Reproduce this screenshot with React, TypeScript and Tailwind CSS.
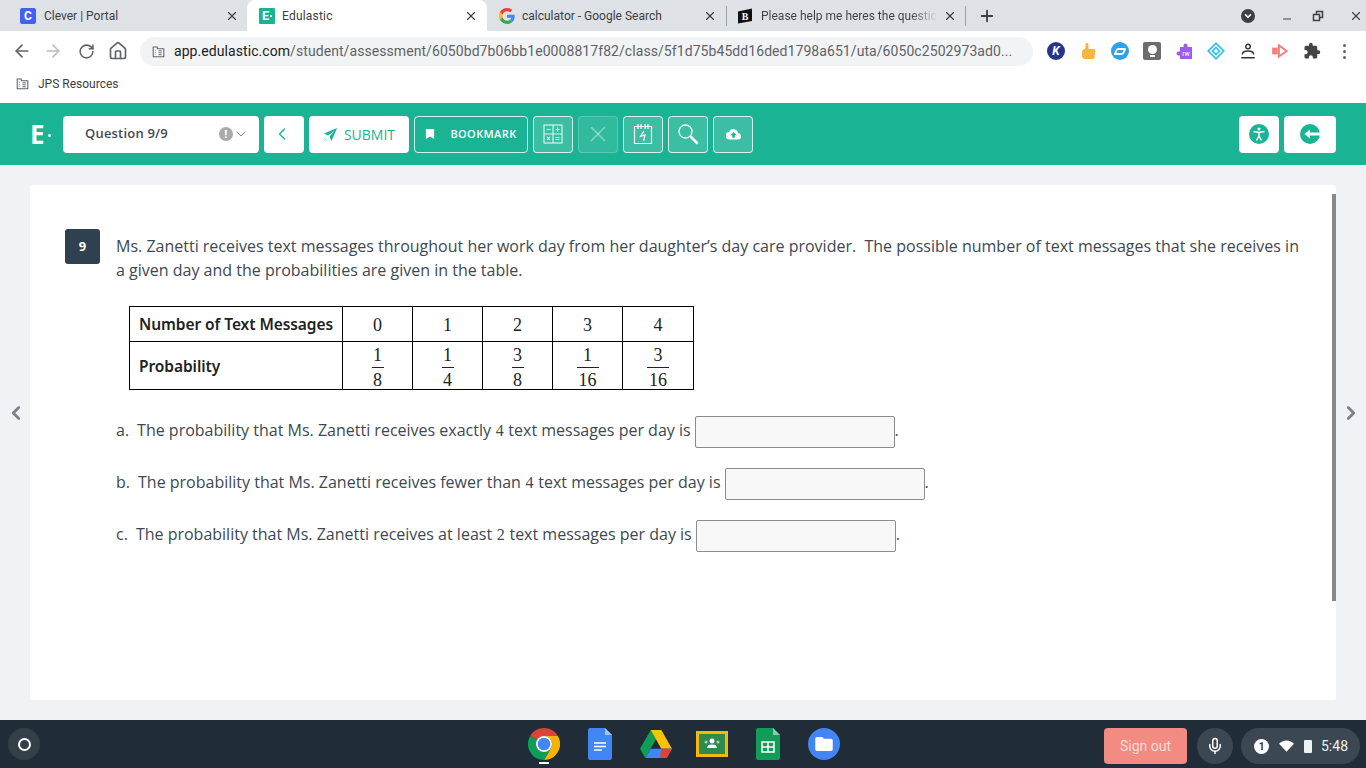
import React from 'react';
import {
  ArrowLeft, ArrowRight, RotateCw, Home, X, Plus, Minus, Mic, ChevronDown, ChevronLeft, ChevronRight,
} from 'lucide-react';

const TabClose = () => <X className="h-[14px] w-[14px] text-[#3c4043]" strokeWidth={2} />;

const CleverIcon = () => (
  <div className="flex h-4 w-4 items-center justify-center rounded-[2px] bg-[#4361ee] text-[12px] font-bold text-white">C</div>
);

const EduIcon = () => (
  <div className="flex h-4 w-4 items-center rounded-[1px] bg-[#1ab394] pl-[3px] text-[13px] font-bold leading-none text-white">
    E<span className="ml-px h-[2px] w-[2px] bg-white" />
  </div>
);

const GoogleIcon = () => (
  <svg viewBox="0 0 48 48" className="h-4 w-4">
    <path fill="#EA4335" d="M24 9.500c3.500 0 6.700 1.200 9.200 3.600l6.900-6.900C35.900 2.400 30.500 0 24 0 14.600 0 6.500 5.400 2.600 13.200l8 6.200C12.500 13.700 17.800 9.500 24 9.500z" />
    <path fill="#4285F4" d="M47 24.500c0-1.600-.1-3.100-.4-4.500H24v9h12.900c-.6 3-2.200 5.500-4.700 7.200l7.700 6c4.500-4.200 7.100-10.300 7.100-17.700z" />
    <path fill="#FBBC05" d="M10.600 28.600c-.5-1.400-.8-3-.8-4.600s.3-3.100.8-4.600l-8-6.200C.9 16.500 0 20.100 0 24s.9 7.500 2.600 10.800l8-6.200z" />
    <path fill="#34A853" d="M24 48c6.500 0 11.900-2.100 15.900-5.800l-7.700-6c-2.200 1.400-4.900 2.300-8.200 2.300-6.200 0-11.500-4.200-13.400-9.900l-8 6.200C6.500 42.600 14.600 48 24 48z" />
  </svg>
);

const BrainlyIcon = () => (
  <svg viewBox="0 0 16 16" className="h-4 w-4">
    <path fill="#111" d="M1 3.500 15 .5v12.500L1 15.500z" />
    <text x="8" y="12" textAnchor="middle" fontSize="10" fontWeight="700" fill="#fff" fontFamily="Liberation Serif, serif">B</text>
  </svg>
);

const BuildingIcon = ({ className = '' }: { className?: string }) => (
  <svg viewBox="0 0 16 16" className={className} fill="none" stroke="currentColor">
    <path d="M1.500 2.500h5v2h8v10h-13z" fill="#fff" strokeWidth="1.300" />
    <path d="M3.500 6.500h1M3.500 9h1M3.500 11.500h1M8 7h4M8 9.500h4M8 12h4" strokeWidth="1.300" />
  </svg>
);

const ToolBtn = ({ children, dim = false, className = 'w-10' }: { children: React.ReactNode; dim?: boolean; className?: string }) => (
  <div
    className={`flex h-[37px] items-center justify-center rounded-[4px] border ${
      dim ? 'border-white/20 bg-white/10' : 'border-white/80 bg-white/15'
    } ${className}`}
  >
    {children}
  </div>
);

const Fraction = ({ top, bottom }: { top: string; bottom: string }) => (
  <div className="flex flex-col items-center pt-[3px] font-['Liberation_Serif',serif] text-[18px] leading-[20px] text-[#222]">
    <span>{top}</span>
    <span className={`mt-[2px] h-px bg-[#222] ${bottom.length > 1 ? 'w-[22px]' : 'w-[12px]'}`} />
    <span className="mt-[3px] leading-[18px]">{bottom}</span>
  </div>
);

const counts = ['0', '1', '2', '3', '4'];
const fractions = [
  ['1', '8'],
  ['1', '4'],
  ['3', '8'],
  ['1', '16'],
  ['3', '16'],
];

const answers = [
  { label: 'a.', pre: 'The probability that Ms. Zanetti receives exactly ', post: ' text messages per day is', n: '4' },
  { label: 'b.', pre: 'The probability that Ms. Zanetti receives fewer than ', post: ' text messages per day is', n: '4' },
  { label: 'c.', pre: 'The probability that Ms. Zanetti receives at least ', post: ' text messages per day is', n: '2' },
];

export default function App() {
  return (
    <div className="flex h-[768px] w-[1366px] flex-col overflow-hidden bg-white font-['Roboto',sans-serif]">
      {/* Tab strip */}
      <div className="flex h-[31px] shrink-0 items-center bg-[#dee1e6] text-[12px] text-[#3c4043]">
        <div className="flex h-full w-[247px] items-center pl-5 pr-[8px]">
          <CleverIcon />
          <span className="ml-2 flex-1">Clever | Portal</span>
          <TabClose />
        </div>
        <div className="flex h-full w-[240px] items-center rounded-t-lg bg-white pl-3 pr-[9px]">
          <EduIcon />
          <span className="ml-[7px] flex-1 tracking-[0.2px]">Edulastic</span>
          <TabClose />
        </div>
        <div className="flex h-full w-[239px] items-center pl-3 pr-[9px]">
          <GoogleIcon />
          <span className="ml-[7px] flex-1">calculator - Google Search</span>
          <TabClose />
        </div>
        <div className="h-5 w-px bg-[#9aa0a6]" />
        <div className="flex h-full w-[238px] items-center pl-[10px] pr-[8px]">
          <BrainlyIcon />
          <span className="ml-2 whitespace-nowrap bg-linear-to-r from-[#3c4043] from-[85%] to-transparent bg-clip-text text-transparent">Please help me heres the questio</span>
          <span className="flex-1" />
          <TabClose />
        </div>
        <div className="h-5 w-px bg-[#9aa0a6]" />
        <Plus className="ml-[12px] h-[18px] w-[18px] text-[#3c4043]" strokeWidth={2.5} />
        <div className="flex-1" />
        <div className="flex h-[14px] w-[14px] items-center justify-center rounded-full bg-[#3c4043]">
          <ChevronDown className="h-[10px] w-[10px] text-white" strokeWidth={4} />
        </div>
        <Minus className="ml-[26px] mt-[7px] h-[12px] w-[12px]" strokeWidth={2} />
        <svg viewBox="0 0 12 12" className="ml-[19px] h-[12px] w-[12px]" fill="none" stroke="#3c4043" strokeWidth="1.500">
          <path d="M1.500 4.500h6v6h-6zM4.500 4V1.500h6v6H8" />
        </svg>
        <X className="ml-[25px] mr-[3px] h-[14px] w-[14px]" strokeWidth={2} />
      </div>

      {/* Address bar */}
      <div className="flex h-[40px] shrink-0 items-center pl-[12px] text-[#5f6368]">
        <ArrowLeft className="h-5 w-5" strokeWidth={2} />
        <ArrowRight className="ml-[11px] h-5 w-5 text-[#babcbe]" strokeWidth={2} />
        <RotateCw className="ml-[15px] h-[17px] w-[17px]" strokeWidth={2.2} />
        <Home className="ml-[13px] h-5 w-5" strokeWidth={2} />
        <div className="ml-[12px] flex h-[29px] w-[893px] items-center rounded-full bg-[#f1f3f4] pl-[12px] text-[14px] tracking-[0.07px]">
          <BuildingIcon className="h-[13px] w-[13px] text-[#5f6368]" />
          <span className="ml-[9px] whitespace-nowrap">
            <span className="text-[#202124]">app.edulastic.com</span>/student/assessment/6050bd7b06bb1e0008817f82/class/5f1d75b45dd16ded1798a651/uta/6050c2502973ad0...
          </span>
        </div>
        <div className="ml-[14px] flex items-center gap-[14px]">
          <div className="flex h-[18px] w-[18px] items-center justify-center rounded-full bg-[#26358b] text-[12px] font-bold italic text-white">K</div>
          <svg viewBox="0 0 16 18" className="h-[18px] w-[18px]"><path fill="#f5b53f" d="M7 1c1 0 1.500.8 1.500 2v4H14c1 0 1.500.8 1.300 2l-.8 6.500c-.2 1-1 1.500-2 1.500H5c-1.500 0-3-1-3-2.500V9c0-1 3-2 3.500-3V2c0-.6.5-1 1.500-1z" /></svg>
          <div className="flex h-[18px] w-[18px] items-center justify-center rounded-full bg-[#2ea2e8]">
            <div className="h-[7px] w-[10px] -skew-x-[25deg] rounded-[2px] border-2 border-white" />
          </div>
          <div className="flex h-[18px] w-[18px] flex-col items-center justify-center rounded-[2px] bg-[#6d6d6d]">
            <div className="h-[9px] w-[9px] rounded-full bg-white" />
            <div className="mt-px h-[2px] w-[5px] bg-white" />
          </div>
          <svg viewBox="0 0 18 18" className="h-[18px] w-[18px]">
            <path fill="#a05ce8" d="M5 5h3.500V3.500a2 2 0 0 1 4 0V5H17v12H5v-3.500H3.500a2 2 0 0 1 0-4H5z" />
            <text x="11" y="14" textAnchor="middle" fontSize="7" fill="#fff" fontFamily="Roboto, sans-serif">rw</text>
          </svg>
          <svg viewBox="0 0 16 16" className="h-[18px] w-[18px]" fill="none">
            <path fill="#3fc1e8" d="M8 0l8 8-8 8-8-8z" />
            <path stroke="#fff" strokeWidth="1" d="M8 3l5 5-5 5-5-5z" />
            <path fill="#fff" d="M8 6l2 2-2 2-2-2z" />
          </svg>
          <svg viewBox="0 0 16 16" className="h-[18px] w-[18px]" fill="none" stroke="#333" strokeWidth="1.300">
            <circle cx="8" cy="4" r="2" />
            <path d="M3 11c0-2 2-3 5-3s5 1 5 3M2 14h12" />
          </svg>
          <svg viewBox="0 0 16 16" className="h-[18px] w-[18px]" fill="none">
            <path fill="#f0837c" d="M1 5h5v6H1z" />
            <path stroke="#f0837c" strokeWidth="1.800" d="M7 3l7 5-7 5z" />
          </svg>
          <svg viewBox="0 0 24 24" className="h-[18px] w-[18px]"><path fill="#444" d="M20.500 11H19V7a2 2 0 0 0-2-2h-4V3.500a2.500 2.500 0 0 0-5 0V5H4a2 2 0 0 0-2 2v3.800h1.500a2.700 2.700 0 0 1 0 5.400H2V20a2 2 0 0 0 2 2h3.800v-1.500a2.700 2.700 0 0 1 5.400 0V22H17a2 2 0 0 0 2-2v-4h1.500a2.500 2.500 0 0 0 0-5z" /></svg>
          <div className="flex h-[18px] w-[18px] flex-col items-center justify-center gap-[3px]">
            <span className="h-[3px] w-[3px] rounded-full bg-[#5f6368]" />
            <span className="h-[3px] w-[3px] rounded-full bg-[#5f6368]" />
            <span className="h-[3px] w-[3px] rounded-full bg-[#5f6368]" />
          </div>
        </div>
      </div>

      {/* Bookmarks */}
      <div className="flex h-[32px] shrink-0 items-start pl-[16px] pt-[4px] text-[12px] text-[#3c4043]">
        <BuildingIcon className="mt-[2px] h-[13px] w-[13px] text-[#5f6368]" />
        <span className="ml-[9px]">JPS Resources</span>
      </div>

      {/* Edulastic toolbar */}
      <div className="flex h-[62px] shrink-0 items-center gap-[5px] bg-[#1ab394] pl-[30px] pr-[30px] font-['Open_Sans',sans-serif]">
        <div className="flex w-[28px] items-center text-[26px] font-bold leading-none text-white">
          E<span className="ml-[3px] mt-[3px] h-[3px] w-[3px] rounded-full bg-white" />
        </div>
        <div className="flex h-[37px] w-[196px] items-center rounded-[4px] bg-white pl-[22px] pr-[10px] text-[13px] font-semibold tracking-[0.2px] text-[#444a55]">
          <span className="flex-1">Question 9/9</span>
          <div className="flex h-[14px] w-[14px] items-center justify-center rounded-full bg-[#aaaaaa] text-[11px] font-bold text-white">!</div>
          <ChevronDown className="h-4 w-4 text-[#888]" strokeWidth={1.5} />
        </div>
        <div className="flex h-[37px] w-10 items-center justify-center rounded-[4px] bg-white pr-[5px]">
          <ChevronLeft className="h-5 w-5 text-[#1ab394]" strokeWidth={1.5} />
        </div>
        <div className="flex h-[37px] w-[100px] items-center justify-center gap-[6px] rounded-[4px] bg-white text-[14px] text-[#1ab394]">
          <svg viewBox="0 0 16 16" className="h-[15px] w-[15px]"><path fill="#1ab394" d="M15 1 1 7l4.500 2L12 4 7 10.500 9 15z" /><path stroke="#9fdccf" strokeWidth="1" d="M1 15l3-3M3 15.500l2-2M.5 13l2-2" /></svg>
          SUBMIT
        </div>
        <ToolBtn className="w-[114px] bg-transparent! gap-[15px]">
          <svg viewBox="0 0 12 14" className="h-[12px] w-[10px]"><path fill="#fff" d="M1 1h10v12L6 10l-5 3z" /></svg>
          <span className="text-[11px] font-semibold tracking-[0.4px] text-white">BOOKMARK</span>
        </ToolBtn>
        <ToolBtn>
          <svg viewBox="0 0 20 20" className="h-5 w-5" fill="none" stroke="#d5f2ec" strokeWidth="1.200">
            <rect x="1" y="1" width="18" height="18" />
            <path d="M10 1v18M1 10h18M3.500 5.500h4M12.500 5.500h4M14.500 3.500v4M4 13l3 3M7 13l-3 3M12.500 13.500h4M12.500 15.500h4" />
          </svg>
        </ToolBtn>
        <ToolBtn dim>
          <X className="h-[26px] w-[26px] text-white/40" strokeWidth={1.4} />
        </ToolBtn>
        <ToolBtn>
          <svg viewBox="0 0 20 22" className="h-[22px] w-5" fill="none" stroke="#fff" strokeWidth="1.200">
            <path d="M1.500 3.500h17v17h-17zM5 1v5M8 1v5M12 1v5M15 1v5" />
            <path d="M11 8 7.500 13.500 12 12l-1.500 6" />
          </svg>
        </ToolBtn>
        <ToolBtn>
          <svg viewBox="0 0 22 22" className="h-[22px] w-[22px]" fill="none" stroke="#fff">
            <circle cx="8.500" cy="8.500" r="6.500" strokeWidth="1.300" />
            <path d="M14 14l6 6" strokeWidth="2.600" strokeLinecap="round" />
          </svg>
        </ToolBtn>
        <ToolBtn>
          <svg viewBox="0 0 24 24" className="h-[15px] w-[15px]"><path fill="#fff" d="M19.400 10A7.500 7.500 0 0 0 5 8 6 6 0 0 0 6 20h13a5 5 0 0 0 .4-10z" /><path fill="#1ab394" d="M12 8l5 5h-3v4h-4v-4H7z" /></svg>
        </ToolBtn>
        <div className="flex-1" />
        <div className="flex h-[37px] w-10 items-center justify-center rounded-[4px] bg-white">
          <svg viewBox="0 0 20 20" className="h-5 w-5">
            <circle cx="10" cy="10" r="10" fill="#1ab394" />
            <circle cx="10" cy="5" r="1.600" fill="#fff" />
            <path stroke="#fff" strokeWidth="1.500" fill="none" d="M4.500 7.500 10 8.500l5.500-1M10 8.500v3.500l-2.500 4.500M10 12l2.500 4.500" />
          </svg>
        </div>
        <div className="flex h-[37px] w-[52px] items-center justify-center rounded-[4px] bg-white">
          <svg viewBox="0 0 20 20" className="h-5 w-5">
            <circle cx="10" cy="10" r="10" fill="#1ab394" />
            <path fill="#fff" d="M4.500 10l5.500-4.500v3H20v3h-10v3z" />
          </svg>
        </div>
      </div>

      {/* Question area */}
      <div className="flex min-h-0 flex-1 items-stretch bg-[#f0f2f5] font-['Open_Sans',sans-serif]">
        <div className="flex w-[30px] shrink-0 items-center pb-[60px]">
          <ChevronLeft className="ml-[5px] h-[22px] w-[22px] text-[#7a8288]" strokeWidth={3} />
        </div>
        <div className="relative mb-5 mt-5 flex flex-1 items-start rounded-[2px] bg-white pl-[35px] pr-[34px] pt-[44px]">
          <div className="absolute right-0 top-[9px] h-[407px] w-1 bg-[#888]" />
          <div className="flex h-[35px] w-[35px] shrink-0 items-center justify-center rounded-[3px] bg-[#2f4151] text-[13px] font-bold text-white">9</div>
          <div className="ml-[16px] flex-1 text-[16px] leading-[24px] text-[#3d4852]">
            <p className="pt-[5px]">
              Ms. Zanetti receives text messages throughout her work day from her daughter’s day care provider.&nbsp; The possible number of text messages that she receives in a given day and the probabilities are given in the table.
            </p>
            <div className="ml-[13px] mt-[24px] w-[565px] border-[1.5px] border-black font-['Noto_Sans',sans-serif]">
              <div className="flex h-[35px] border-b border-black">
                <div className="flex w-[213px] items-center border-r border-black pl-[9px] text-[15.500px] font-semibold tracking-[-0.07px] text-[#222]">Number of Text Messages</div>
                {counts.map((c, i) => (
                  <div key={c} className={`flex items-center justify-center pt-[2px] font-['Liberation_Serif',serif] text-[18px] text-[#222] ${i < 4 ? 'w-[70px] border-r border-black' : 'flex-1'}`}>{c}</div>
                ))}
              </div>
              <div className="flex h-[47px]">
                <div className="flex w-[213px] items-center border-r border-black pl-[9px] text-[15.500px] font-semibold tracking-[-0.07px] text-[#222]">Probability</div>
                {fractions.map(([t, b], i) => (
                  <div key={i} className={`flex items-start justify-center ${i < 4 ? 'w-[70px] border-r border-black' : 'flex-1'}`}>
                    <Fraction top={t} bottom={b} />
                  </div>
                ))}
              </div>
            </div>
            <div className="mt-[26px] flex flex-col gap-5">
              {answers.map((a) => (
                <div key={a.label} className="flex h-[32px] items-center whitespace-nowrap">
                  <span className="pb-[4px]">{a.label}</span>
                  <span className="ml-[8px] pb-[4px]">
                    {a.pre}
                    <span className="px-[0.5px] font-['Liberation_Serif',serif]">{a.n}</span>
                    {a.post}
                  </span>
                  <div className="ml-[4px] h-[32px] w-[200px] rounded-[2px] border border-[#8c8c8c] bg-[#f8f8f8]" />
                  <span className="pb-[4px]">.</span>
                </div>
              ))}
            </div>
          </div>
        </div>
        <div className="flex w-[30px] shrink-0 items-center justify-end pb-[60px]">
          <ChevronRight className="mr-[4px] h-[22px] w-[22px] text-[#7a8288]" strokeWidth={3} />
        </div>
      </div>

      {/* Chrome OS shelf */}
      <div className="flex h-[48px] shrink-0 items-center bg-[#202d38] pl-[8px] pr-[6px]">
        <div className="flex h-8 w-8 items-center justify-center rounded-full bg-[#33404a]">
          <div className="h-[13px] w-[13px] rounded-full border-2 border-white" />
        </div>
        <div className="ml-[488px] flex items-center gap-[24px]">
          <div className="relative h-8 w-8">
            <svg viewBox="0 0 32 32" className="h-8 w-8">
              <path fill="#db4437" d="M16 0a16 16 0 0 1 13.860 8H16a8 8 0 0 0-6.930 4L2.140 8A16 16 0 0 1 16 0z" />
              <path fill="#f4b400" d="M29.860 8A16 16 0 0 1 16 32l6.930-12A8 8 0 0 0 16 8z" />
              <path fill="#0f9d58" d="M2.140 8A16 16 0 0 0 16 32l6.930-12a8 8 0 0 1-13.860-8z" />
              <circle cx="16" cy="16" r="8" fill="#fff" />
              <circle cx="16" cy="16" r="6.300" fill="#4285f4" />
            </svg>
            <div className="absolute -bottom-[4px] left-[11px] h-[2px] w-[10px] bg-white" />
          </div>
          <div className="flex w-8 justify-center">
            <svg viewBox="0 0 24 32" className="h-8 w-6">
              <path fill="#4285f4" d="M2 0h15l7 7v23a2 2 0 0 1-2 2H2a2 2 0 0 1-2-2V2a2 2 0 0 1 2-2z" />
              <path fill="#a1c2fa" d="M17 0l7 7h-7z" />
              <path stroke="#fff" strokeWidth="1.500" d="M6 15h12M6 18.500h12M6 22h8" />
            </svg>
          </div>
          <svg viewBox="0 0 32 28" className="h-7 w-8">
            <path fill="#0f9d58" d="M10.700 0 16 9.300 5.300 28 0 18.700z" />
            <path fill="#ffc107" d="M10.700 0h10.600L32 18.700H21.300z" />
            <path fill="#4285f4" d="M5.300 28l5.400-9.300H32L26.700 28z" />
            <path fill="#db4437" d="M32 18.700 26.700 28H20l1.300-9.300z" />
          </svg>
          <div className="flex h-[26px] w-8 items-center justify-center border-[3px] border-[#f2b90f] bg-[#2f8a4c]">
            <svg viewBox="0 0 20 14" className="h-[14px] w-5"><circle cx="10" cy="4" r="2.500" fill="#fff" /><path fill="#fff" d="M5 11c0-2.500 2-3.500 5-3.500s5 1 5 3.500z" /><circle cx="4" cy="5" r="1.500" fill="#a5d6b5" /><circle cx="16" cy="5" r="1.500" fill="#a5d6b5" /></svg>
          </div>
          <div className="flex w-8 justify-center">
            <svg viewBox="0 0 24 32" className="h-8 w-6">
              <path fill="#0f9d58" d="M2 0h15l7 7v23a2 2 0 0 1-2 2H2a2 2 0 0 1-2-2V2a2 2 0 0 1 2-2z" />
              <path fill="#87ceac" d="M17 0l7 7h-7z" />
              <path fill="none" stroke="#fff" strokeWidth="1.500" d="M6 14h12v10H6zM6 19h12M12 14v10" />
            </svg>
          </div>
          <div className="flex h-8 w-8 items-center justify-center rounded-full bg-[#4285f4]">
            <svg viewBox="0 0 20 16" className="h-[14px] w-[18px]"><path fill="#fff" d="M2 0h6l2 2h8a2 2 0 0 1 2 2v10a2 2 0 0 1-2 2H2a2 2 0 0 1-2-2V2a2 2 0 0 1 2-2z" /></svg>
          </div>
        </div>
        <div className="flex-1" />
        <div className="mt-[4px] flex h-[36px] w-[83px] items-center justify-center rounded-[4px] bg-[#f28b82] text-[14px] text-[#fbdcd9]">Sign out</div>
        <div className="ml-[10px] mt-[4px] flex h-[36px] w-[36px] items-center justify-center rounded-full bg-[#3b4853]">
          <Mic className="h-[18px] w-[18px] text-white" strokeWidth={2} />
        </div>
        <div className="ml-[8px] mt-[4px] flex h-[36px] w-[119px] items-center rounded-full bg-[#3b4853] pl-[13px] text-[14px] text-[#eef0f1]">
          <div className="flex h-[15px] w-[15px] items-center justify-center rounded-full bg-white text-[10px] font-bold text-[#333]">1</div>
          <svg viewBox="0 0 16 12" className="ml-[10px] h-[12px] w-[15px]"><path fill="#fff" d="M8 12 0 3.500C2 1.500 4.800 0 8 0s6 1.500 8 3.500z" /></svg>
          <div className="ml-[10px] h-[13px] w-[8px] rounded-[1px] bg-[#eef0f1]" />
          <span className="ml-[9px]">5:48</span>
        </div>
      </div>
    </div>
  );
}
